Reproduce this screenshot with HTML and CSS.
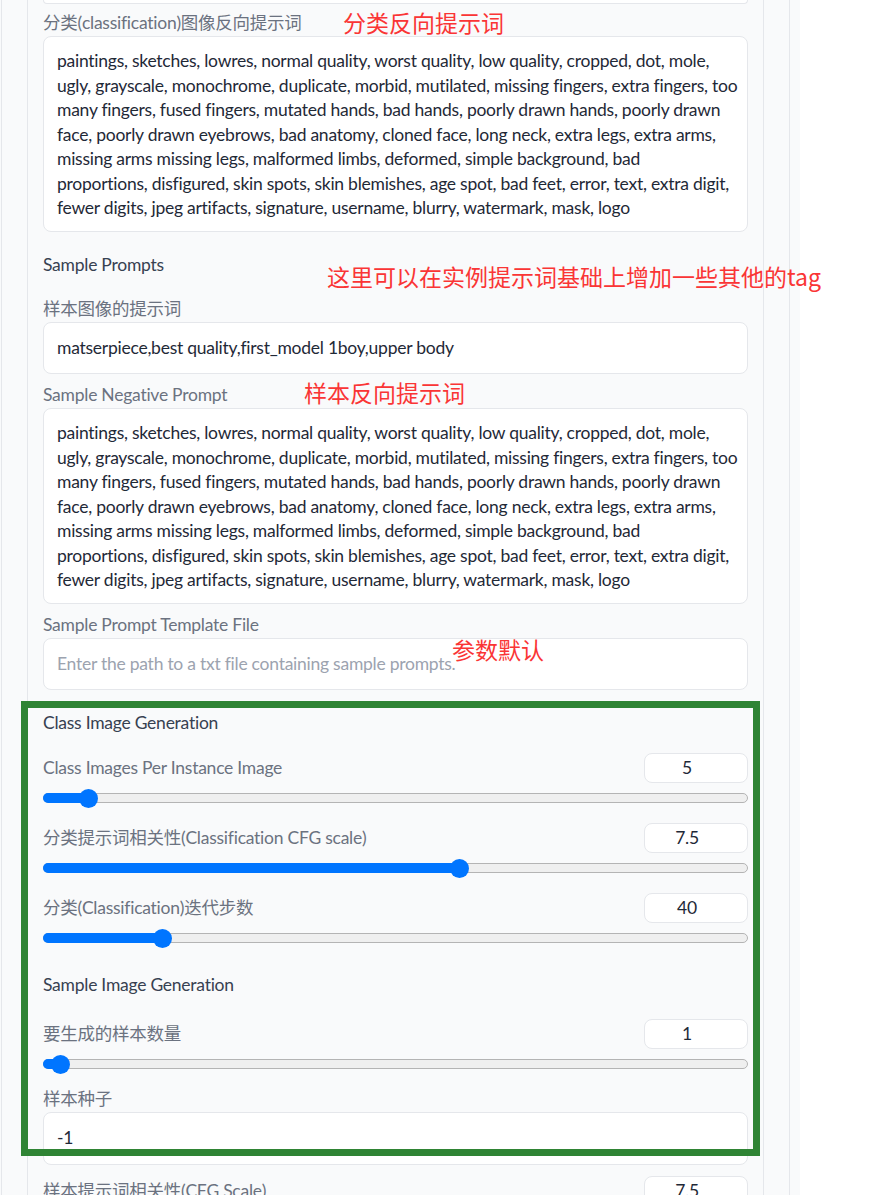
FILE: index.html
```html
<!DOCTYPE html>
<html lang="zh">
<head>
<meta charset="utf-8">
<title>Sample settings</title>
<link rel="stylesheet" href="styles.css">
</head>
<body>
<div class="page">
  <div class="outer">
    <div class="inner">
      <div class="stack">
        <div class="prev-tail"></div>

        <div class="field">
          <div class="lbl">分类(classification)图像反向提示词</div>
          <div class="textbox multi">paintings, sketches, lowres, normal quality, worst quality, low quality, cropped, dot, mole, ugly, grayscale, monochrome, duplicate, morbid, mutilated, missing fingers, extra fingers, too many fingers, fused fingers, mutated hands, bad hands, poorly drawn hands, poorly drawn face, poorly drawn eyebrows, bad anatomy, cloned face, long neck, extra legs, extra arms, missing arms missing legs, malformed limbs, deformed, simple background, bad<br>proportions, disfigured, skin spots, skin blemishes, age spot, bad feet, error, text, extra digit, fewer digits, jpeg artifacts, signature, username, blurry, watermark, mask, logo</div>
        </div>

        <div class="group-title">Sample Prompts</div>

        <div class="field">
          <div class="lbl">样本图像的提示词</div>
          <div class="textbox">matserpiece,best quality,first_model 1boy,upper body</div>
        </div>

        <div class="field">
          <div class="lbl">Sample Negative Prompt</div>
          <div class="textbox multi">paintings, sketches, lowres, normal quality, worst quality, low quality, cropped, dot, mole, ugly, grayscale, monochrome, duplicate, morbid, mutilated, missing fingers, extra fingers, too many fingers, fused fingers, mutated hands, bad hands, poorly drawn hands, poorly drawn face, poorly drawn eyebrows, bad anatomy, cloned face, long neck, extra legs, extra arms, missing arms missing legs, malformed limbs, deformed, simple background, bad<br>proportions, disfigured, skin spots, skin blemishes, age spot, bad feet, error, text, extra digit, fewer digits, jpeg artifacts, signature, username, blurry, watermark, mask, logo</div>
        </div>

        <div class="field">
          <div class="lbl">Sample Prompt Template File</div>
          <div class="textbox placeholder">Enter the path to a txt file containing sample prompts.</div>
        </div>

        <div class="group-title tight">Class Image Generation</div>

        <div class="slider-field">
          <div class="slider-head"><span class="lbl">Class Images Per Instance Image</span><div class="num">5</div></div>
          <div class="track-wrap"><div class="track"><div class="fill" style="width:45px"><span class="thumb"></span></div></div></div>
        </div>

        <div class="slider-field">
          <div class="slider-head"><span class="lbl">分类提示词相关性(Classification CFG scale)</span><div class="num">7.5</div></div>
          <div class="track-wrap"><div class="track"><div class="fill" style="width:416px"><span class="thumb"></span></div></div></div>
        </div>

        <div class="slider-field">
          <div class="slider-head"><span class="lbl">分类(Classification)迭代步数</span><div class="num">40</div></div>
          <div class="track-wrap"><div class="track"><div class="fill" style="width:119px"><span class="thumb"></span></div></div></div>
        </div>

        <div class="group-title">Sample Image Generation</div>

        <div class="slider-field">
          <div class="slider-head"><span class="lbl">要生成的样本数量</span><div class="num">1</div></div>
          <div class="track-wrap"><div class="track"><div class="fill" style="width:17px"><span class="thumb"></span></div></div></div>
        </div>

        <div class="field">
          <div class="lbl">样本种子</div>
          <div class="textbox">-1</div>
        </div>

        <div class="slider-field">
          <div class="slider-head"><span class="lbl">样本提示词相关性(CFG Scale)</span><div class="num">7.5</div></div>
          <div class="track-wrap"><div class="track"><div class="fill" style="width:416px"><span class="thumb"></span></div></div></div>
        </div>
      </div>
    </div>
  </div>

  <div class="note note-1">分类反向提示词</div>
  <div class="note note-2">这里可以在实例提示词基础上增加一些其他的tag</div>
  <div class="note note-3">样本反向提示词</div>
  <div class="note note-4">参数默认</div>
  <div class="highlight"></div>
</div>
</body>
</html>
```

FILE: styles.css
```css
html, body {
  margin: 0;
  padding: 0;
  background: #ffffff;
  overflow: hidden;
}

body {
  font-family: "Lato", "Noto Sans CJK SC", sans-serif;
  font-size: 17.5px;
  letter-spacing: -0.25px;
  color: #1f2937;
}

.page {
  position: relative;
  width: 800px;
  height: 1195px;
  background: #f9fafb;
}

.outer {
  margin-left: 1px;
  width: 789px;
  height: 100%;
  box-sizing: border-box;
  border-left: 1px solid #e5e7eb;
  border-right: 1px solid #e5e7eb;
  padding: 0 25px;
}

.inner {
  height: 100%;
  box-sizing: border-box;
  border-left: 1px solid #e5e7eb;
  border-right: 1px solid #e5e7eb;
  padding: 0 15px;
  overflow: hidden;
}

.stack {
  display: flex;
  flex-direction: column;
  gap: 11px;
}

.prev-tail {
  height: 3px;
  margin-bottom: -2px;
  background: #ffffff;
  border: 1px solid #e5e7eb;
  border-top: none;
  border-radius: 0 0 8px 8px;
}

.lbl {
  display: block;
  line-height: 20px;
  color: #6b7280;
  white-space: nowrap;
}

.field .lbl {
  margin-bottom: 3px;
}

.textbox {
  background: #ffffff;
  border: 1px solid #e5e7eb;
  border-radius: 8px;
  padding: 13px 6px 13px 13px;
  line-height: 24.5px;
  color: #1f2937;
}

.textbox.multi {
  padding: 12px 6px 10px 13px;
}

.textbox.placeholder {
  color: #9ca3af;
}

.group-title {
  margin: 12px 0 13px;
  line-height: 20px;
  color: #374151;
}

.group-title.tight {
  margin-bottom: 9px;
}

.slider-field {
  padding-bottom: 4px;
}

.slider-head {
  display: flex;
  align-items: center;
  justify-content: space-between;
  height: 30px;
}

.num {
  width: 104px;
  height: 30px;
  box-sizing: border-box;
  padding-right: 18px;
  background: #ffffff;
  border: 1px solid #e5e7eb;
  border-radius: 8px;
  text-align: center;
  line-height: 28px;
  color: #1f2937;
}

.track-wrap {
  height: 20px;
  margin-top: 5px;
  display: flex;
  align-items: center;
}

.track {
  position: relative;
  width: 100%;
  height: 10px;
  box-sizing: border-box;
  background: #efefef;
  border: 1px solid #b4b4b4;
  border-radius: 5px;
}

.fill {
  position: absolute;
  left: -1px;
  top: -1px;
  height: 10px;
  background: #0075ff;
  border-radius: 5px 0 0 5px;
}

.thumb {
  position: absolute;
  right: -9.5px;
  top: 50%;
  width: 19px;
  height: 19px;
  margin-top: -9.5px;
  border-radius: 50%;
  background: #0075ff;
}

.note {
  position: absolute;
  font-family: "Noto Sans CJK SC", sans-serif;
  font-size: 23px;
  line-height: 30px;
  letter-spacing: 0;
  color: #fa3535;
  white-space: nowrap;
}

.note-1 { left: 343px; top: 7px; }
.note-2 { left: 327px; top: 261px; }
.note-3 { left: 304px; top: 377px; }
.note-4 { left: 452px; top: 634px; }

.highlight {
  position: absolute;
  left: 21px;
  top: 701px;
  width: 739px;
  height: 455px;
  box-sizing: border-box;
  border: 7px solid #2f8434;
}
```
